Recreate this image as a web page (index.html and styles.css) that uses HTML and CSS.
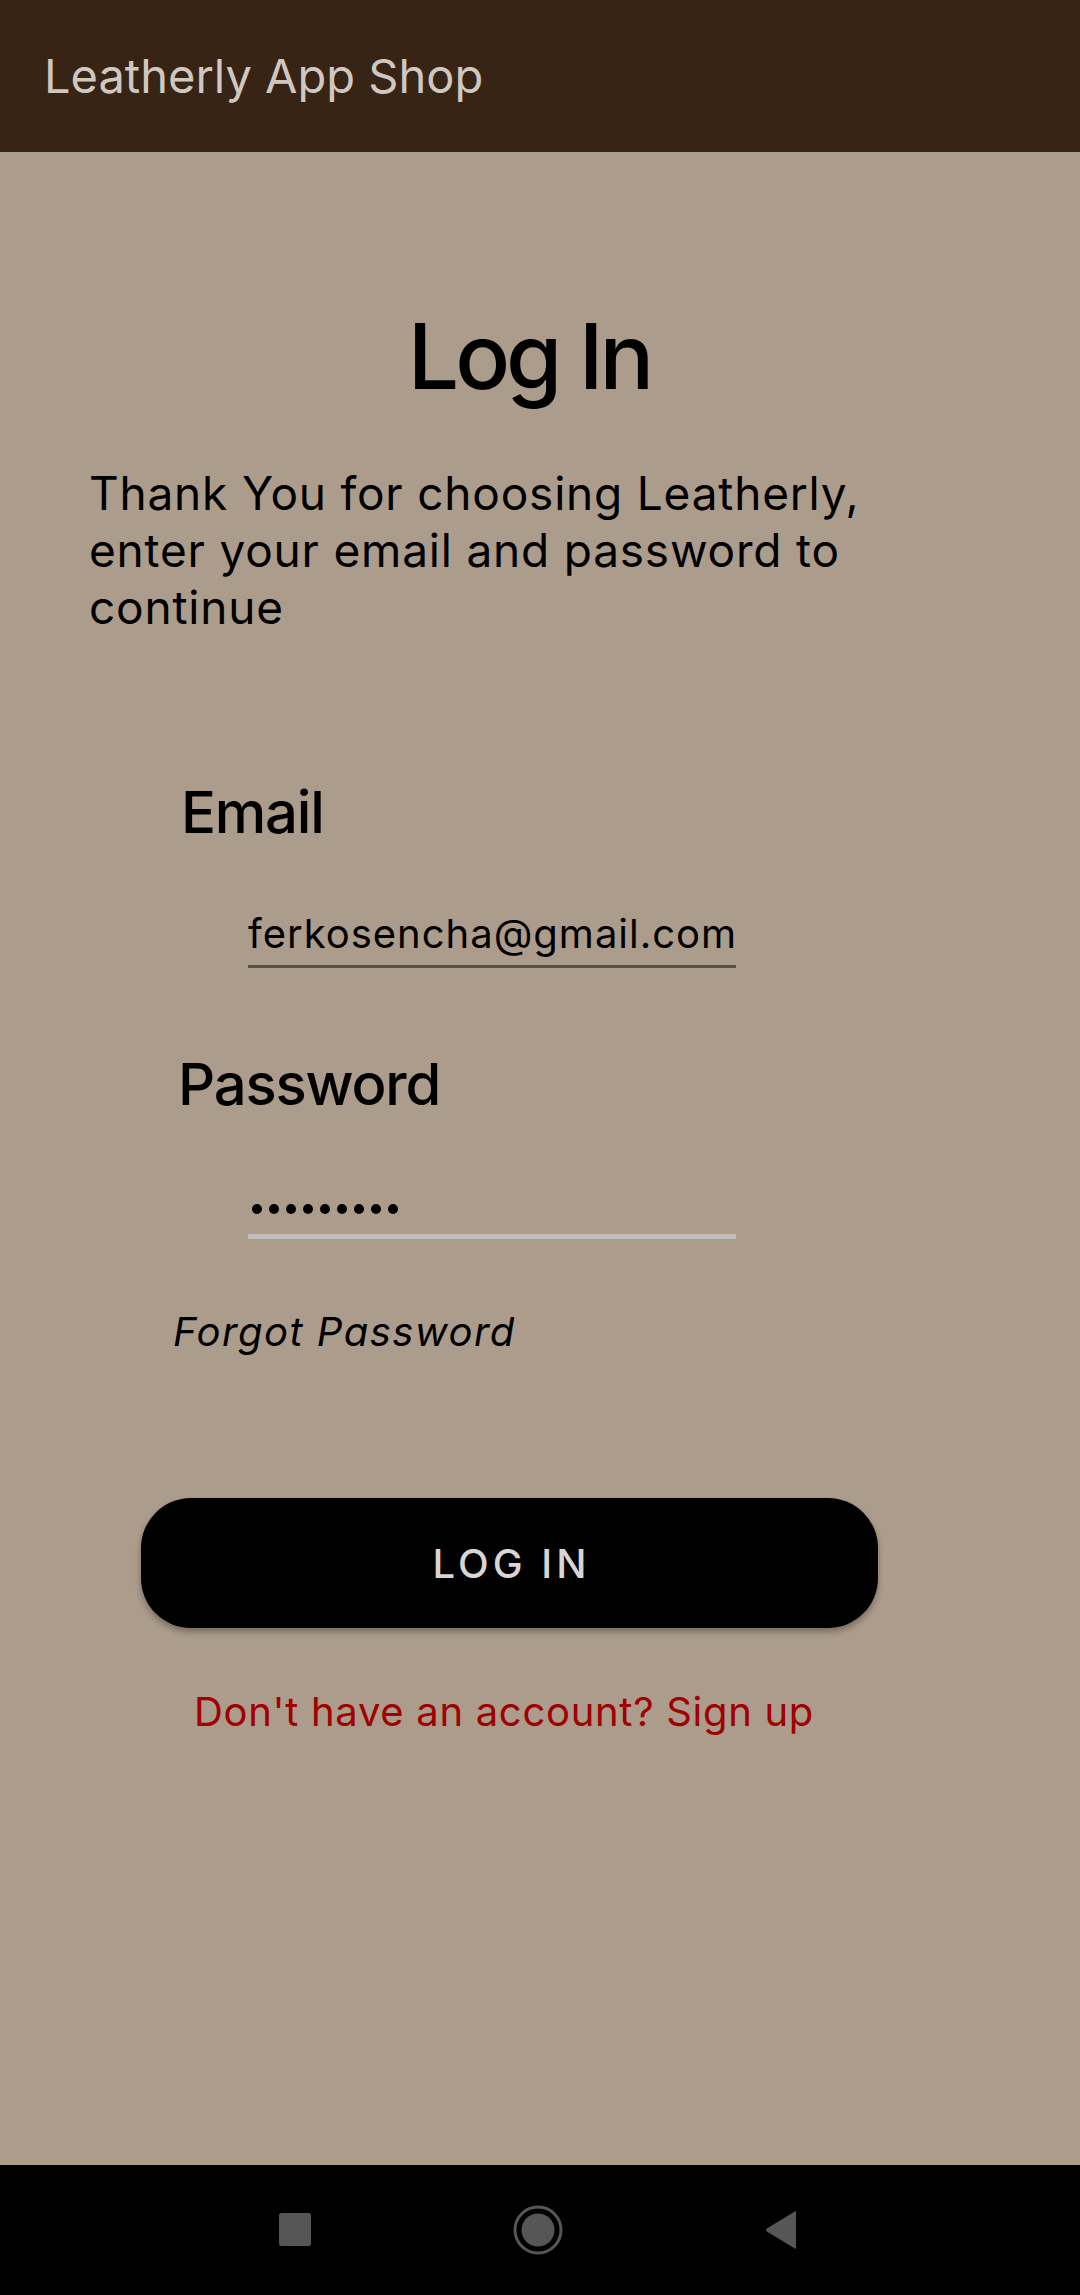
FILE: index.html
```html
<!DOCTYPE html>
<html lang="en">
<head>
<meta charset="utf-8">
<title>Leatherly App Shop</title>
<link rel="stylesheet" href="styles.css">
</head>
<body>
<header class="appbar">
  <span class="appbar-title">Leatherly App Shop</span>
</header>
<main class="screen">
  <h1 class="heading">Log In</h1>
  <p class="intro">Thank You for choosing Leatherly, enter your email and password to continue</p>
  <form class="form">
    <label class="field-label">Email</label>
    <div class="field field-email">ferkosencha@gmail.com</div>
    <label class="field-label field-label-password">Password</label>
    <div class="field field-password" aria-label="password">
      <span class="dot"></span><span class="dot"></span><span class="dot"></span><span class="dot"></span><span class="dot"></span><span class="dot"></span><span class="dot"></span><span class="dot"></span><span class="dot"></span>
    </div>
    <a class="forgot">Forgot Password</a>
    <button type="button" class="login-btn">LOG IN</button>
    <a class="signup">Don't have an account? Sign up</a>
  </form>
</main>
<nav class="navbar">
  <svg class="nav-icon" width="60" height="60" viewBox="0 0 60 60"><rect x="14" y="13" width="32" height="33" rx="2.5" fill="#565656"/></svg>
  <svg class="nav-icon nav-home" width="60" height="60" viewBox="0 0 60 60"><circle cx="30" cy="30" r="23" fill="none" stroke="#565656" stroke-width="3"/><circle cx="30" cy="30" r="16.5" fill="#565656"/></svg>
  <svg class="nav-icon" width="60" height="60" viewBox="0 0 60 60"><path d="M45 12.5 L45 47.5 Q45 50 43.5 48.2 L15.8 31.6 Q14 30 15.8 28.4 L43.5 11.8 Q45 10 45 12.5 Z" fill="#565656"/></svg>
</nav>
</body>
</html>
```
FILE: styles.css
```css
html, body {
  margin: 0;
  padding: 0;
}
body {
  width: 1080px;
  height: 2295px;
  display: flex;
  flex-direction: column;
  background: #ac9c8c;
  font-family: "Inter", "Noto Sans", sans-serif;
  color: #000;
  overflow: hidden;
}
.appbar {
  height: 152px;
  flex: 0 0 152px;
  background: #372415;
  display: flex;
  align-items: center;
  padding-left: 44px;
  box-sizing: border-box;
}
.appbar-title {
  font-size: 47px;
  color: #cfc8c1;
  line-height: 1.21;
}
.screen {
  flex: 1;
  display: flex;
  flex-direction: column;
}
.heading {
  margin: 149px 22px 0 0;
  font-size: 91px;
  font-weight: 500;
  line-height: 110px;
  letter-spacing: -4px;
  text-align: center;
}
.intro {
  margin: 54px 0 0 89px;
  width: 880px;
  font-size: 46px;
  letter-spacing: 0.8px;
  line-height: 57px;
}
.form {
  display: flex;
  flex-direction: column;
  align-items: flex-start;
  margin: 0;
}
.field-label {
  margin: 141px 0 0 181px;
  font-size: 58px;
  font-weight: 500;
  letter-spacing: -1.2px;
  line-height: 70px;
}
.field-label-password {
  margin-top: 81px;
  margin-left: 178px;
}
.field {
  margin: 63px 0 0 248px;
  width: 488px;
  height: 48px;
  font-size: 40px;
  line-height: 48px;
}
.field-email {
  letter-spacing: 1px;
  padding-bottom: 7px;
  border-bottom: 3px solid #5c5046;
}
.field-password {
  display: flex;
  align-items: center;
  gap: 7px;
  padding: 2px 0 0 4px;
  box-sizing: content-box;
  width: 484px;
  height: 50px;
  padding-bottom: 0;
  border-bottom: 5px solid #c3bfbb;
}
.dot {
  width: 10px;
  height: 10px;
  border-radius: 50%;
  background: #000;
}
.forgot {
  margin: 69px 0 0 173px;
  font-size: 40px;
  font-style: italic;
  letter-spacing: 1.5px;
  line-height: 48px;
}
.login-btn {
  margin: 142px 0 0 141px;
  width: 737px;
  height: 130px;
  border: none;
  border-radius: 50px;
  background: #000;
  color: #d9d5d2;
  font-family: inherit;
  font-size: 40px;
  font-weight: 500;
  letter-spacing: 4px;
  padding: 0 0 0 4px;
  box-shadow: 0 4px 6px rgba(0, 0, 0, 0.3);
  display: flex;
  align-items: center;
  justify-content: center;
}
.signup {
  margin: 60px 0 0 0;
  align-self: center;
  transform: translateX(-36px);
  font-size: 40px;
  letter-spacing: 0.7px;
  line-height: 48px;
  color: #a00000;
}
.navbar {
  flex: 0 0 130px;
  height: 130px;
  background: #000;
  display: flex;
  align-items: center;
  gap: 183px;
  padding-left: 265px;
  box-sizing: border-box;
}
.nav-icon {
  display: block;
}
```
